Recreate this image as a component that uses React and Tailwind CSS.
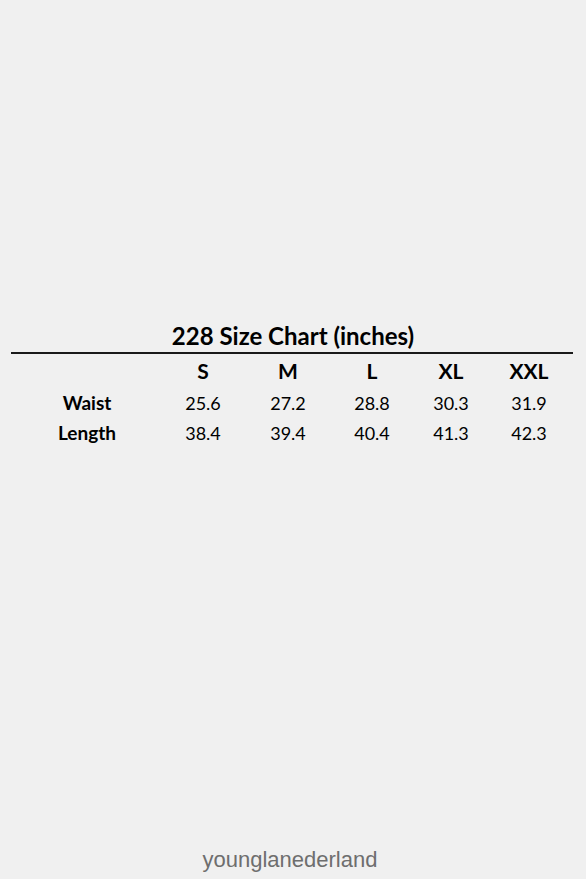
export default function App() {
  const cols = ["S", "M", "L", "XL", "XXL"];
  const rows = [
    ["Waist", ["25.6", "27.2", "28.8", "30.3", "31.9"]],
    ["Length", ["38.4", "39.4", "40.4", "41.3", "42.3"]],
  ];
  return (
    <div className="w-[586px] h-[879px] bg-[#f0f0f0] flex flex-col text-black" style={{ fontFamily: "Lato, 'Noto Sans', sans-serif" }}>
      <div className="h-[321px]" />
      <div className="text-center font-bold text-[24px] leading-[30px]">228 Size Chart (inches)</div>
      <div className="ml-[11px] mr-[13px] h-[2px] bg-[#1a1a1a] mt-[1px]" />
      <div className="grid grid-cols-[174px_58px_112px_56px_102px_54px] mt-[2px]">
        <div />
        {cols.map((c) => (
          <div key={c} className="text-center font-bold text-[21px] leading-[30px]">{c}</div>
        ))}
      </div>
      {rows.map(([label, vals], i) => (
        <div key={label} className="grid grid-cols-[174px_58px_112px_56px_102px_54px] mt-[4px]">
          <div className="text-center font-bold text-[19px] leading-[26px]">{label}</div>
          {vals.map((v, j) => (
            <div key={j} className="text-center text-[18px] leading-[26px]">{v}</div>
          ))}
        </div>
      ))}
      <div className="flex-1" />
      <div className="text-center text-[#6e6e6e] text-[22px] leading-[24px] mb-[7px] pr-[6px]" style={{ fontFamily: "'Liberation Sans', Arial, sans-serif" }}>younglanederland</div>
    </div>
  );
}
